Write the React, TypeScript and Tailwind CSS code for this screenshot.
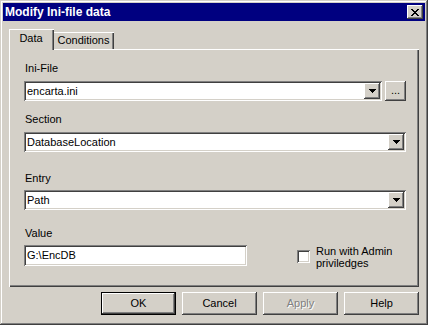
import React from "react";

const raised =
  "shadow-[inset_-1px_-1px_#404040,inset_1px_1px_#ffffff,inset_-2px_-2px_#808080,inset_2px_2px_#d4d0c8]";
const sunken =
  "shadow-[inset_1px_1px_#808080,inset_-1px_-1px_#ffffff,inset_2px_2px_#404040,inset_-2px_-2px_#d4d0c8]";

function DownArrow() {
  return (
    <svg width="7" height="4" viewBox="0 0 7 4" shapeRendering="crispEdges">
      <rect x="0" y="0" width="7" height="1" fill="#000" />
      <rect x="1" y="1" width="5" height="1" fill="#000" />
      <rect x="2" y="2" width="3" height="1" fill="#000" />
      <rect x="3" y="3" width="1" height="1" fill="#000" />
    </svg>
  );
}

function CloseGlyph() {
  const rows = [
    [0, 1, 6, 7],
    [1, 2, 5, 6],
    [2, 3, 4, 5],
    [3, 4],
    [2, 3, 4, 5],
    [1, 2, 5, 6],
    [0, 1, 6, 7],
  ];
  return (
    <svg width="8" height="7" viewBox="0 0 8 7" shapeRendering="crispEdges">
      {rows.map((r, y) =>
        r.map((x) => <rect key={`${y}-${x}`} x={x} y={y} width="1" height="1" fill="#000" />)
      )}
    </svg>
  );
}

function Combo({ value, className = "" }: { value: string; className?: string }) {
  return (
    <div className={`h-[20px] bg-white ${sunken} flex items-stretch p-[2px] ${className}`}>
      <div className="flex-1 flex items-center pl-[1px] leading-[13px] overflow-hidden whitespace-nowrap">
        {value}
      </div>
      <div className={`w-[16px] bg-[#d4d0c8] ${raised} flex items-center justify-center`}>
        <DownArrow />
      </div>
    </div>
  );
}

function Button({
  label,
  def = false,
  disabled = false,
}: {
  label: string;
  def?: boolean;
  disabled?: boolean;
}) {
  if (def) {
    return (
      <div className="w-[75px] h-[23px] border border-black">
        <div className={`w-full h-full ${raised} flex items-center justify-center leading-[13px]`}>
          {label}
        </div>
      </div>
    );
  }
  return (
    <div
      className={`w-[75px] h-[23px] ${raised} flex items-center justify-center leading-[13px] ${
        disabled ? "text-[#808080] [text-shadow:1px_1px_0_#ffffff]" : ""
      }`}
    >
      {label}
    </div>
  );
}

export default function App() {
  return (
    <div className="w-[428px] h-[325px] bg-[#d4d0c8] p-[3px] flex flex-col font-['Liberation_Sans',Arial,sans-serif] text-[11px] text-black shadow-[inset_-1px_-1px_#404040,inset_1px_1px_#d4d0c8,inset_-2px_-2px_#808080,inset_2px_2px_#ffffff]">
      {/* Title bar */}
      <div className="h-[18px] bg-[#000080] flex items-center justify-between pl-[2px] pr-[2px]">
        <span className="text-white font-bold leading-[18px] text-[12px]">Modify Ini-file data</span>
        <div className={`w-[16px] h-[14px] bg-[#d4d0c8] ${raised} flex items-center justify-center`}>
          <CloseGlyph />
        </div>
      </div>

      {/* Tabs */}
      <div className="mt-[8px] mx-[6px] h-[20px] flex items-end">
        <div className="relative z-10 -mb-px w-[45px] h-[21px] bg-[#d4d0c8] border-l border-t border-white shadow-[inset_-1px_0_#404040,inset_-2px_0_#808080] flex justify-center pt-[2px] pr-[2px] leading-[13px]">
          Data
        </div>
        <div className="w-[60px] h-[17px] bg-[#d4d0c8] border-t border-white shadow-[inset_-1px_0_#404040,inset_-2px_0_#808080] flex justify-center pt-[1px] pr-[1px] leading-[13px]">
          Conditions
        </div>
      </div>

      {/* Panel */}
      <div className="mx-[6px] h-[238px] bg-[#d4d0c8] shadow-[inset_1px_1px_#ffffff,inset_-1px_-1px_#404040,inset_-2px_-2px_#808080] pt-[13px] pl-[15px] pr-[13px] flex flex-col">
        <div className="h-[13px] leading-[13px] pl-px">Ini-File</div>
        <div className="mt-[6px] flex gap-[3px]">
          <Combo value="encarta.ini" className="flex-1" />
          <div className={`w-[21px] h-[20px] ${raised} flex items-center justify-center leading-[13px] pb-[2px]`}>
            ...
          </div>
        </div>

        <div className="mt-[12px] h-[13px] leading-[13px] pl-px">Section</div>
        <Combo value="DatabaseLocation" className="mt-[6px]" />

        <div className="mt-[20px] h-[13px] leading-[13px] pl-px">Entry</div>
        <Combo value="Path" className="mt-[5px]" />

        <div className="mt-[17px] h-[13px] leading-[13px] pl-px">Value</div>
        <div className="mt-[5px] flex items-start">
          <div className={`w-[223px] h-[21px] bg-white ${sunken} flex items-center pl-[3px] leading-[13px]`}>
            G:\EncDB
          </div>
          <div className="ml-[50px] flex items-start">
            <div className={`mt-[5px] w-[13px] h-[13px] bg-white ${sunken}`} />
            <div className="ml-[6px] leading-[12px]">
              Run with Admin
              <br />
              priviledges
            </div>
          </div>
        </div>
      </div>

      {/* Buttons */}
      <div className="mt-[5px] mr-[6px] flex justify-end gap-[6px]">
        <Button label="OK" def />
        <Button label="Cancel" />
        <Button label="Apply" disabled />
        <Button label="Help" />
      </div>
    </div>
  );
}
